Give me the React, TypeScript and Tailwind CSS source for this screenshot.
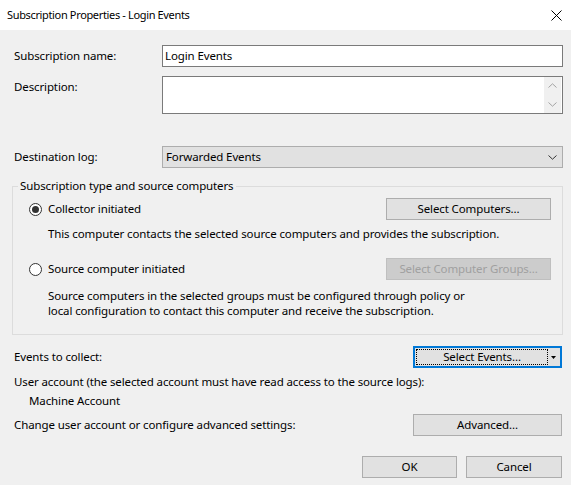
import React from 'react';

const font = { fontFamily: '"Segoe UI", "Noto Sans", "Open Sans", sans-serif' };

function Radio({ checked, label }: { checked?: boolean; label: string }) {
  return (
    <label className="flex items-center gap-[6px]">
      <span className="flex h-[13px] w-[13px] items-center justify-center rounded-full border border-[#333333] bg-white">
        {checked && <span className="h-[7px] w-[7px] rounded-full bg-[#333333]" />}
      </span>
      <span>{label}</span>
    </label>
  );
}

function Button({ children, className = '', disabled }: { children: React.ReactNode; className?: string; disabled?: boolean }) {
  return (
    <button
      disabled={disabled}
      className={
        'flex h-[22px] items-center justify-center border ' +
        (disabled
          ? 'border-[#bfbfbf] bg-[#cccccc] text-[#a0a0a0] '
          : 'border-[#adadad] bg-[#e1e1e1] text-black ') +
        className
      }
    >
      {children}
    </button>
  );
}

export default function App() {
  return (
    <div
      className="h-[485px] w-[571px] overflow-hidden bg-[#f0f0f0] text-[11.5px] leading-[16px] tracking-[-0.12px] text-black"
      style={font}
    >
      {/* title bar */}
      <div className="flex h-[30px] items-center justify-between bg-white pl-[7px] pr-[9px]">
        <span className="text-[11px] tracking-[-0.35px]">Subscription Properties - Login Events</span>
        <svg width="11" height="11" viewBox="0 0 11 11" className="text-black">
          <path d="M0.5 0.5 L10.5 10.5 M10.5 0.5 L0.5 10.5" stroke="currentColor" strokeWidth="1" fill="none" />
        </svg>
      </div>

      <div className="flex flex-col pl-[12px] pr-[8px]">
        {/* name */}
        <div className="mt-[15px] flex h-[22px] items-center">
          <span className="ml-[2px] w-[148px]">Subscription name:</span>
          <div className="flex h-[22px] flex-1 items-center border border-[#7a7a7a] bg-white px-[2px]">Login Events</div>
        </div>

        {/* description */}
        <div className="mt-[9px] flex h-[38px]">
          <span className="ml-[2px] mt-[3px] w-[148px]">Description:</span>
          <div className="flex flex-1 border border-[#7a7a7a] bg-white">
            <div className="flex-1" />
            <div className="mr-[1px] flex w-[17px] flex-col items-center justify-between bg-[#f0f0f0] py-[6px]">
              <svg width="9" height="5" viewBox="0 0 9 5">
                <path d="M0.5 4.5 L4.5 0.8 L8.5 4.5" stroke="#a3a3a3" strokeWidth="1" fill="none" />
              </svg>
              <svg width="9" height="5" viewBox="0 0 9 5">
                <path d="M0.5 0.5 L4.5 4.2 L8.5 0.5" stroke="#a3a3a3" strokeWidth="1" fill="none" />
              </svg>
            </div>
          </div>
        </div>

        {/* destination log */}
        <div className="mt-[32px] flex h-[22px] items-center">
          <span className="ml-[2px] w-[148px]">Destination log:</span>
          <div className="flex h-[22px] flex-1 items-center justify-between border border-[#adadad] bg-[#e1e1e1] pl-[3px] pr-[5px]">
            <span>Forwarded Events</span>
            <svg width="9" height="5" viewBox="0 0 9 5">
              <path d="M0.5 0.5 L4.5 4.2 L8.5 0.5" stroke="#333333" strokeWidth="1" fill="none" />
            </svg>
          </div>
        </div>

        {/* group box */}
        <fieldset className="mt-[10px] border border-[#dcdcdc] pb-[16px] pl-[16px] pr-[11px]">
          <legend className="-ml-[11px] px-[2px]">Subscription type and source computers</legend>
          <div className="mt-[4px] flex h-[22px] items-center justify-between">
            <Radio checked label="Collector initiated" />
            <Button className="w-[165px]">Select Computers...</Button>
          </div>
          <p className="ml-[19px] mt-[6px]">This computer contacts the selected source computers and provides the subscription.</p>
          <div className="mt-[16px] flex h-[22px] items-center justify-between">
            <Radio label="Source computer initiated" />
            <Button disabled className="w-[165px]">Select Computer Groups...</Button>
          </div>
          <p className="ml-[19px] mt-[8px] leading-[15px]">
            Source computers in the selected groups must be configured through policy or
            <br />
            local configuration to contact this computer and receive the subscription.
          </p>
        </fieldset>

        {/* events */}
        <div className="mt-[11px] flex h-[22px] items-center justify-between">
          <span className="ml-[2px]">Events to collect:</span>
          <div className="mr-[1px] flex h-[22px] w-[149px] items-stretch border-2 border-[#0078d7] bg-[#e1e1e1] p-[1px]">
            <div className="flex flex-1 items-center justify-center border border-dotted border-black">Select Events...</div>
            <div className="flex w-[11px] items-center justify-center">
              <svg width="5" height="3" viewBox="0 0 5 3">
                <path d="M0 0 L5 0 L2.5 3 Z" fill="#000" />
              </svg>
            </div>
          </div>
        </div>

        <p className="ml-[2px] mt-[6px]">User account (the selected account must have read access to the source logs):</p>
        <p className="ml-[17px] mt-[3px]">Machine Account</p>

        <div className="mt-[5px] flex h-[22px] items-center justify-between">
          <span className="ml-[2px]">Change user account or configure advanced settings:</span>
          <Button className="mr-[1px] w-[149px]">Advanced...</Button>
        </div>

        <div className="mt-[20px] flex justify-end gap-[9px] pr-[1px]">
          <Button className="w-[95px]">OK</Button>
          <Button className="w-[96px]">Cancel</Button>
        </div>
      </div>
    </div>
  );
}
